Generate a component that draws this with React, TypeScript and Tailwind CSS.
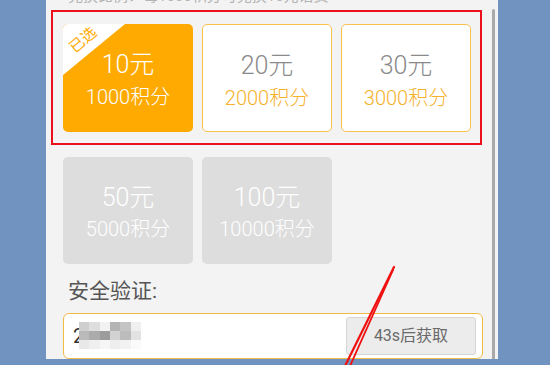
const font = { fontFamily: '"Roboto", "Noto Sans CJK SC", sans-serif' };

type Option = { yuan: number; points: number };

const active: Option[] = [
  { yuan: 10, points: 1000 },
  { yuan: 20, points: 2000 },
  { yuan: 30, points: 3000 },
];

const disabled: Option[] = [
  { yuan: 50, points: 5000 },
  { yuan: 100, points: 10000 },
];

// blurred phone number pixels
const blur = [
  ['#cfcfcf', '#dedede', '#f2f2f2', '#b4b4b4', '#c4c4c4', '#efefef'],
  ['#bababa', '#ababab', '#9c9c9c', '#d2d2d2', '#bcbcbc', '#e2e2e2'],
  ['#e8e8e8', '#efefef', '#f6f6f6', '#eeeeee', '#f2f2f2', '#fafafa'],
];

function Card({ opt, selected }: { opt: Option; selected?: boolean }) {
  return (
    <div
      className={`relative w-[130px] h-[108px] rounded-[5px] overflow-hidden flex flex-col items-center font-light ${
        selected ? 'bg-[#ffaa00]' : 'bg-white border-[1.5px] border-[#fac04e]'
      }`}
    >
      {selected && (
        <>
          <svg className="absolute left-0 top-0" width="62" height="51" viewBox="0 0 62 51">
            <polygon points="0,0 62,0 0,51" fill="#ffffff" />
          </svg>
          <span className="absolute left-[5px] top-[8px] text-[15px] leading-[16px] font-normal text-[#ffaa00] -rotate-[40deg]">
            已选
          </span>
        </>
      )}
      <span
        className={`mt-[27px] text-[25px] leading-[28px] ${selected ? 'text-white' : 'text-[#8a8a8a]'}`}
      >
        {opt.yuan}元
      </span>
      <span
        className={`mt-[7px] text-[20px] leading-[22px] ${selected ? 'text-white' : 'text-[#f6b12c]'}`}
      >
        {opt.points}积分
      </span>
    </div>
  );
}

export default function App() {
  return (
    <div className="relative w-[550px] h-[365px] bg-[#7093bf] overflow-hidden" style={font}>
      <div className="relative ml-[46px] w-[452px] h-[359px] bg-[#f3f3f3] overflow-hidden flex flex-col">
        {/* cut-off line above */}
        <p className="-mt-[12px] ml-[22px] text-[15px] leading-[17px] text-[#b4b4b4] whitespace-nowrap">
          兑换比例：每1000积分可兑换10元话费
        </p>

        {/* highlighted first row */}
        <div className="mt-[5px] ml-[5px] w-[431px] h-[135px] border-2 border-[#ec0f1c] flex gap-[9px] pl-[10px] pt-[12px]">
          {active.map((o, i) => (
            <Card key={o.yuan} opt={o} selected={i === 0} />
          ))}
        </div>

        {/* unavailable options */}
        <div className="mt-[12px] ml-[17px] flex gap-[9px] font-light">
          {disabled.map((o) => (
            <div
              key={o.yuan}
              className="w-[130px] h-[107px] rounded-[5px] bg-[#dddddd] flex flex-col items-center"
            >
              <span className="mt-[27px] text-[25px] leading-[28px] text-white">{o.yuan}元</span>
              <span className="mt-[6px] text-[20px] leading-[22px] text-white">{o.points}积分</span>
            </div>
          ))}
        </div>

        <p className="mt-[15px] ml-[22px] text-[21px] leading-[24px] text-[#555555]">安全验证:</p>

        <div className="mt-[10px] ml-[17px] w-[420px] h-[46px] shrink-0 rounded-[6px] border-[1.5px] border-[#f1bb48] bg-white flex items-center pr-[6px]">
          <div className="relative ml-[9px] w-[72px] h-[28px] flex items-center">
            <span className="text-[20px] leading-[24px] text-[#333333]">2</span>
            <div className="absolute left-[6px] top-[0px] w-[62px] grid grid-cols-6 blur-[0.6px]">
              {blur.flat().map((c, i) => (
                <span key={i} className="block h-[9px]" style={{ background: c }} />
              ))}
            </div>
          </div>
          <button className="ml-auto w-[130px] h-[38px] rounded-[3px] border border-[#d6d6d6] bg-[#ececec] text-[16px] text-[#6a6a6a]">
            43s后获取
          </button>
        </div>

        {/* scrollbar */}
        <div className="absolute right-[3px] top-[9px] bottom-0 w-[3px] rounded-t-full bg-[#a9a9a9]" />
      </div>

      {/* annotation stroke */}
      <svg className="absolute left-0 top-0 pointer-events-none" width="550" height="365" viewBox="0 0 550 365">
        <line x1="394" y1="267" x2="345" y2="366" stroke="#f01010" strokeWidth="2.2" strokeLinecap="round" />
        <line x1="393" y1="270" x2="350" y2="366" stroke="#f01010" strokeWidth="1.8" strokeLinecap="round" />
      </svg>
    </div>
  );
}
